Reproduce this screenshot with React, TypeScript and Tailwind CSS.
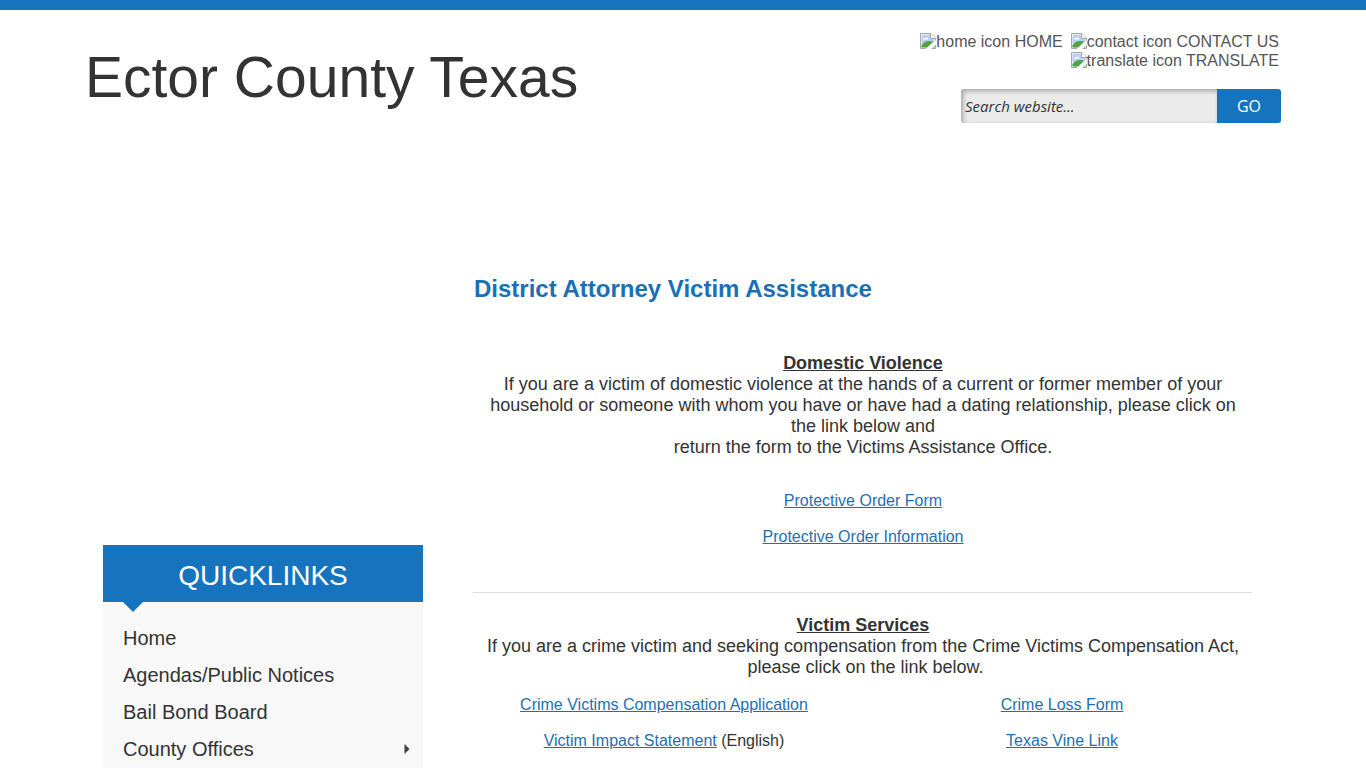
import type { ReactNode } from 'react';

interface QuickLink {
  label: string;
  hasChildren?: boolean;
}

const topLinks = [
  { alt: 'home icon', label: 'HOME' },
  { alt: 'contact icon', label: 'CONTACT US' },
  { alt: 'translate icon', label: 'TRANSLATE' },
];

const quickLinks: QuickLink[] = [
  { label: 'Home' },
  { label: 'Agendas/Public Notices' },
  { label: 'Bail Bond Board' },
  { label: 'County Offices', hasChildren: true },
];

function MissingImageIcon() {
  return (
    <svg className="inline-block align-text-bottom" width="16" height="17" viewBox="0 0 16 17" aria-hidden="true">
      <path d="M0.5 0.5H11L15.5 5V15.5H0.5Z" fill="#fff" />
      <path d="M1.5 1.5H10.5V5.5H14.5V9L8 14.5H1.5Z" fill="#bccff3" />
      <path d="M3 6.5C3 5 4.5 4.5 5.3 5.2C6.5 3.8 8.8 5 8.3 6.5Z" fill="#fff" />
      <path d="M1.5 14.5V12.5C3.5 9.5 6.5 7.5 10 8L13 8.5L7 14.5Z" fill="#4fa53a" />
      <path d="M12 14.5L14.5 12.5V14.5Z" fill="#4fa53a" />
      <path d="M0.5 15.5V0.5H11L15.5 5V7.5M15.5 12V15.5H11.5M6 15.5H0.5" fill="none" stroke="#a8a8a8" />
      <path d="M10.5 0.5V5.5H15.5" fill="#fff" stroke="#a8a8a8" />
      <path d="M6 16L16 7.5V11.5L10.5 16Z" fill="#fff" />
    </svg>
  );
}

function DocLink({ children }: { children: ReactNode }) {
  return (
    <a href="#" className="text-[#1f6fb0] underline">
      {children}
    </a>
  );
}

function Header() {
  return (
    <header className="mx-auto flex w-full max-w-[1200px] justify-between px-0.5">
      <h1 className="pt-[35px] text-[57px] leading-[64px]">Ector County Texas</h1>
      <div className="flex w-[400px] flex-col items-end pt-[22px]">
        <nav className="pr-0.5 text-right text-base leading-[19px] text-[#555]">
          {topLinks.map((link) => (
            <a key={link.label} href="#" className="ml-2 inline-block">
              <MissingImageIcon />
              {link.alt} {link.label}
            </a>
          ))}
        </nav>
        <form className="mt-[19px] flex h-[34px] w-80 overflow-hidden rounded-[3px] font-['Open_Sans',sans-serif]">
          <input
            type="text"
            aria-label="Search website"
            placeholder="Search website..."
            className="min-w-0 flex-1 bg-[#ebebeb] px-1 text-[15px] italic shadow-[inset_2px_2px_5px_rgba(0,0,0,0.3)] placeholder:text-[#333]"
          />
          <button type="button" className="w-16 bg-[#1673bd] text-base text-white">
            GO
          </button>
        </form>
      </div>
    </header>
  );
}

function Sidebar() {
  return (
    <aside className="flex w-80 shrink-0 flex-col pt-[295px]">
      <h2 className="relative bg-[#1673bd] pt-[13px] pb-2 text-center text-[28px] leading-9 text-white">
        QUICKLINKS
        <svg className="absolute top-full left-5" width="20" height="10" viewBox="0 0 20 10" aria-hidden="true">
          <path d="M0 0H20L10 10Z" fill="#1673bd" />
        </svg>
      </h2>
      <ul className="flex-1 bg-[#f8f8f8] px-5 pt-[18px] text-xl leading-[37px]">
        {quickLinks.map((link) => (
          <li key={link.label}>
            <a href="#" className="-mr-2 flex items-center justify-between">
              {link.label}
              {link.hasChildren && (
                <svg width="6" height="12" viewBox="0 0 6 12" className="mr-px" aria-hidden="true">
                  <path d="M0.5 0L5.5 5L0.5 10Z" fill="#444" />
                </svg>
              )}
            </a>
          </li>
        ))}
      </ul>
    </aside>
  );
}

function Content() {
  return (
    <main className="flex-1 pt-6 text-center text-lg leading-[21px]">
      <h2 className="pl-px text-left text-2xl leading-[30px] font-bold text-[#1a6fb5]">
        District Attorney Victim Assistance
      </h2>

      <section className="pt-[49px] pl-px">
        <h3 className="font-bold underline">Domestic Violence</h3>
        <p className="px-2">
          If you are a victim of domestic violence at the hands of a current or former member of your household or
          someone with whom you have or have had a dating relationship, please click on the link below and
          <br />
          return the form to the Victims Assistance Office.
        </p>
        <div className="flex flex-col gap-[18px] pt-[34px] text-base leading-[18px]">
          <p><DocLink>Protective Order Form</DocLink></p>
          <p><DocLink>Protective Order Information</DocLink></p>
        </div>
      </section>

      <hr className="mt-[46px] border-[#ddd]" />

      <section className="pt-[22px] pl-px">
        <h3 className="font-bold underline">Victim Services</h3>
        <p className="px-2">
          If you are a crime victim and seeking compensation from the Crime Victims Compensation Act,
          <br />
          &nbsp;please click on the link below.
        </p>
        <div className="grid grid-cols-2 gap-[18px] pt-[18px] text-base leading-[18px]">
          <p><DocLink>Crime Victims Compensation Application</DocLink></p>
          <p><DocLink>Crime Loss Form</DocLink></p>
          <p><DocLink>Victim Impact Statement</DocLink> (English)</p>
          <p><DocLink>Texas Vine Link</DocLink></p>
        </div>
      </section>
    </main>
  );
}

export default function App() {
  return (
    <div className="flex min-h-screen flex-col border-t-10 border-[#1673bd] bg-white font-['Liberation_Sans',Arial,sans-serif] text-[#333]">
      <Header />
      <div className="mx-auto mt-[127px] flex w-full max-w-[1200px] flex-1 gap-[50px] pr-[31px] pl-5">
        <Sidebar />
        <Content />
      </div>
    </div>
  );
}
